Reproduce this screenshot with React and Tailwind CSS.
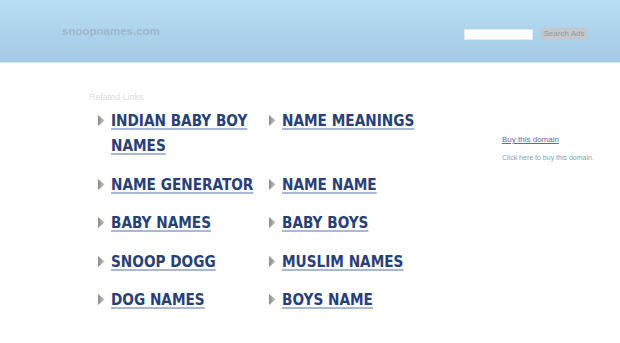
const links = [
  "INDIAN BABY BOY NAMES",
  "NAME MEANINGS",
  "NAME GENERATOR",
  "NAME NAME",
  "BABY NAMES",
  "BABY BOYS",
  "SNOOP DOGG",
  "MUSLIM NAMES",
  "DOG NAMES",
  "BOYS NAME",
];

function Arrow() {
  return (
    <svg width="8" height="11" viewBox="0 0 8 11" className="mt-[6px] shrink-0">
      <defs>
        <linearGradient id="ag" x1="0" y1="0" x2="1" y2="0">
          <stop offset="0" stopColor="#8a8a8a" />
          <stop offset="1" stopColor="#c4c4c4" />
        </linearGradient>
      </defs>
      <path d="M1 0 L7.5 5.5 L1 11 Z" fill="url(#ag)" />
    </svg>
  );
}

export default function App() {
  return (
    <div className="w-[620px] h-[343px] bg-white overflow-hidden font-['Liberation_Sans',sans-serif]">
      <header className="h-[63px] bg-gradient-to-b from-[#b7def4] to-[#a4cae4] border-b border-[#d4ebf7] flex items-start justify-between pl-[62px] pr-[33px] pt-[24px]">
        <div className="text-[11.5px] font-bold text-[#9eb6cc] leading-[14px]">snoopnames.com</div>
        <div className="flex items-center gap-[8px] pt-[4px]">
          <input className="w-[69px] h-[11px] bg-white border border-[#d8ecf8] outline-none" />
          <button className="w-[46px] h-[12px] bg-[#c3c8cc] text-[#8e9aa4] text-[8px] leading-[12px]">Search Ads</button>
        </div>
      </header>
      <div className="flex">
        <main className="pl-[89px] pt-[28px] w-[500px]">
          <div className="text-[9px] leading-[12px] text-[#dcdcdc]">Related Links</div>
          <ul className="grid grid-cols-[171px_171px] gap-y-[13.5px] pl-[8px] mt-[6px] font-['DejaVu_Sans_Condensed','DejaVu_Sans',sans-serif]">
            {links.map((l) => (
              <li key={l} className="flex gap-[6px]">
                <Arrow />
                <a
                  href="#"
                  className="text-[15.2px] font-bold leading-[25px] text-[#283f78] underline decoration-[#a8b8d6] decoration-[1.5px] underline-offset-[2px] max-w-[150px]"
                >
                  {l}
                </a>
              </li>
            ))}
          </ul>
        </main>
        <aside className="pt-[72px] pl-[2px]">
          <a href="#" className="text-[8px] text-[#5a6f99] underline leading-[10px] block">Buy this domain</a>
          <div className="text-[7px] text-[#8c9db2] mt-[8px]">Click here to buy this domain.</div>
        </aside>
      </div>
    </div>
  );
}
